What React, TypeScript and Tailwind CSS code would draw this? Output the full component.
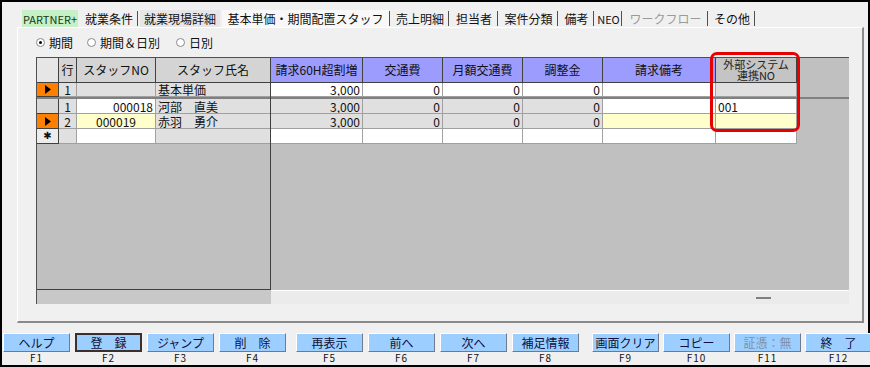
import type { ReactNode } from "react";

type Bg = "w" | "g" | "y";
type Align = "l" | "c" | "r";
type CellDef = { t?: string; bg: Bg; a?: Align };
type RowDef = {
  mark: "arrow" | "none" | "new";
  h: string;
  left: CellDef[];
  right: CellDef[];
};

const bgClass: Record<Bg, string> = {
  w: "bg-white",
  g: "bg-[#e0e0e0]",
  y: "bg-[#ffffcc]",
};

const alignClass: Record<Align, string> = {
  l: "justify-start pl-[2px]",
  c: "justify-center",
  r: "justify-end pr-[2px]",
};

const leftCols = ["w-[18px]", "w-[79px]", "w-[114px]"];
const rightCols = ["w-[92px]", "w-[80px]", "w-[80px]", "w-[80px]", "w-[113px]", "w-[81px]"];

const rows: RowDef[] = [
  {
    mark: "arrow",
    h: "h-[14px]",
    left: [{ t: "1", bg: "g", a: "c" }, { bg: "g" }, { t: "基本単価", bg: "g", a: "l" }],
    right: [
      { t: "3,000", bg: "w", a: "r" },
      { t: "0", bg: "w", a: "r" },
      { t: "0", bg: "w", a: "r" },
      { t: "0", bg: "w", a: "r" },
      { bg: "w" },
      { bg: "g" },
    ],
  },
  {
    mark: "none",
    h: "h-[15px]",
    left: [
      { t: "1", bg: "g", a: "c" },
      { t: "000018", bg: "w", a: "r" },
      { t: "河部　直美", bg: "g", a: "l" },
    ],
    right: [
      { t: "3,000", bg: "g", a: "r" },
      { t: "0", bg: "g", a: "r" },
      { t: "0", bg: "g", a: "r" },
      { t: "0", bg: "g", a: "r" },
      { bg: "w" },
      { t: "001", bg: "w", a: "l" },
    ],
  },
  {
    mark: "arrow",
    h: "h-[15px]",
    left: [
      { t: "2", bg: "g", a: "c" },
      { t: "000019", bg: "y", a: "c" },
      { t: "赤羽　勇介", bg: "g", a: "l" },
    ],
    right: [
      { t: "3,000", bg: "g", a: "r" },
      { t: "0", bg: "g", a: "r" },
      { t: "0", bg: "g", a: "r" },
      { t: "0", bg: "g", a: "r" },
      { bg: "y" },
      { bg: "y" },
    ],
  },
  {
    mark: "new",
    h: "h-[15px]",
    left: [{ bg: "g" }, { bg: "w" }, { bg: "g" }],
    right: [{ bg: "w" }, { bg: "w" }, { bg: "w" }, { bg: "w" }, { bg: "w" }, { bg: "w" }],
  },
];

const tabs = [
  { label: "PARTNER+", cls: "w-[56px] mr-[4px] bg-[#c6f0c6] text-[#143814] text-[11px]", sep: false },
  { label: "就業条件", cls: "w-[54px] mr-[1px]", sep: true },
  { label: "就業現場詳細", cls: "w-[80px] ml-[2px] mr-[2px] bg-[#e6e6e6]", sep: false },
  { label: "基本単価・期間配置スタッフ", cls: "w-[167px] bg-[#f8f8f8]", sep: true },
  { label: "売上明細", cls: "w-[56px] ml-[2px]", sep: true },
  { label: "担当者", cls: "w-[46px] ml-[2px]", sep: true },
  { label: "案件分類", cls: "w-[57px] ml-[2px]", sep: true },
  { label: "備考", cls: "w-[33px] ml-[2px]", sep: true },
  { label: "NEO", cls: "w-[25px] ml-[2px] text-[11px]", sep: true },
  { label: "ワークフロー", cls: "w-[83px] ml-[2px] text-[#9a9a9a]", sep: true },
  { label: "その他", cls: "w-[44px] ml-[2px]", sep: true },
];

const fkeys = [
  {
    cls: "ml-[1px] gap-[5px]",
    items: [
      { label: "ヘルプ", key: "F1" },
      { label: "登　録", key: "F2", focus: true },
      { label: "ジャンプ", key: "F3" },
      { label: "削　除", key: "F4" },
    ],
  },
  {
    cls: "ml-[10px] gap-[5px]",
    items: [
      { label: "再表示", key: "F5" },
      { label: "前へ", key: "F6" },
      { label: "次へ", key: "F7" },
      { label: "補足情報", key: "F8" },
    ],
  },
  {
    cls: "ml-[13px] gap-[4px]",
    items: [
      { label: "画面クリア", key: "F9" },
      { label: "コピー", key: "F10" },
      { label: "証憑：無", key: "F11", disabled: true },
      { label: "終　了", key: "F12" },
    ],
  },
];

const Radio = ({ checked }: { checked?: boolean }) => (
  <span className="w-[9px] h-[9px] rounded-full border border-[#8a8a8a] bg-white flex items-center justify-center">
    {checked && <span className="w-[3px] h-[3px] rounded-full bg-black" />}
  </span>
);

const RowMark = ({ mark }: { mark: RowDef["mark"] }) => {
  if (mark === "arrow") {
    return (
      <div className="w-[22px] h-full border-r border-b border-[#404040] bg-[#ff8000] flex items-center justify-center">
        <svg width="6" height="9" viewBox="0 0 6 9">
          <path d="M0 0 L6 4.5 L0 9 Z" fill="#000" />
        </svg>
      </div>
    );
  }
  if (mark === "new") {
    return (
      <div className="w-[22px] h-full border-r border-b border-[#404040] bg-[#ececec] flex items-center justify-center text-[10px] leading-none font-['DejaVu_Sans',sans-serif]">
        ✱
      </div>
    );
  }
  return <div className="w-[22px] h-full border-r border-b border-[#404040] bg-[#d8d8d8]" />;
};

const Cell = ({ def, w, noRight }: { def: CellDef; w: string; noRight?: boolean }) => (
  <div
    className={`${w} h-full flex items-center ${noRight ? "" : "border-r"} border-b border-[#a0a0a0] ${bgClass[def.bg]} ${alignClass[def.a ?? "l"]} whitespace-nowrap overflow-hidden leading-[13px]`}
  >
    {def.t}
  </div>
);

const HeadCell = ({ w, bg, children, noRight }: { w: string; bg: string; children?: ReactNode; noRight?: boolean }) => (
  <div
    className={`${w} h-full flex items-center justify-center ${noRight ? "" : "border-r"} border-b border-[#404040] ${bg} whitespace-nowrap`}
  >
    {children}
  </div>
);

export default function App() {
  return (
    <div className="w-[870px] h-[367px] overflow-hidden bg-[#f0f0f0] border-l-2 border-t-2 border-b-2 border-black text-[12px] leading-[14px] text-[#111] font-['Noto_Sans_CJK_JP',sans-serif]">
      <div className="h-[331px] pt-[8px] border-r-2 border-black">
        {/* tabs */}
        <div className="h-[17px] pl-[20px] flex items-stretch">
          {tabs.map((t) => (
            <div key={t.label} className="flex items-center">
              <div className={`${t.cls} h-[17px] flex items-center justify-center whitespace-nowrap`}>{t.label}</div>
              {t.sep && <div className="w-px h-[15px] bg-[#505050]" />}
            </div>
          ))}
        </div>

        {/* panel */}
        <div className="ml-[15px] w-[847px] h-[296px] border-l border-t border-l-white border-t-white border-r-2 border-b-2 border-r-[#8a8a8a] border-b-[#8a8a8a] pt-[8px]">
          <div className="h-[13px] pl-[18px] flex items-center">
            <Radio checked />
            <span className="ml-[4px]">期間</span>
            <span className="ml-[14px]">
              <Radio />
            </span>
            <span className="ml-[4px]">期間＆日別</span>
            <span className="ml-[16px]">
              <Radio />
            </span>
            <span className="ml-[4px]">日別</span>
          </div>

          {/* grid */}
          <div className="relative ml-[18px] mt-[8px] w-[813px] border-l border-t border-[#505050]">
            <div className="flex h-[232px]">
              {/* frozen pane */}
              <div className="w-[234px] border-r border-b border-[#404040] bg-[#c0c0c0] flex flex-col">
                <div className="h-[25px] flex">
                  <HeadCell w="w-[22px]" bg="bg-[#e6e6e6]" />
                  <HeadCell w={leftCols[0]} bg="bg-[#d4d4d4]">行</HeadCell>
                  <HeadCell w={leftCols[1]} bg="bg-[#d4d4d4]">スタッフNO</HeadCell>
                  <HeadCell w={leftCols[2]} bg="bg-[#d4d4d4]" noRight>
                    スタッフ氏名
                  </HeadCell>
                </div>
                {rows.map((r, i) => (
                  <div key={i}>
                    <div className={`${r.h} flex`}>
                      <RowMark mark={r.mark} />
                      {r.left.map((c, j) => (
                        <Cell key={j} def={c} w={leftCols[j]} noRight={j === 2} />
                      ))}
                    </div>
                    {i === 0 && <div className="h-[2px] bg-[#808080]" />}
                  </div>
                ))}
              </div>

              {/* scrolling pane */}
              <div className="flex-1 bg-[#c0c0c0] flex flex-col">
                <div className="h-[25px] flex">
                  <HeadCell w={rightCols[0]} bg="bg-[#9c9cff]">請求60H超割増</HeadCell>
                  <HeadCell w={rightCols[1]} bg="bg-[#9c9cff]">交通費</HeadCell>
                  <HeadCell w={rightCols[2]} bg="bg-[#9c9cff]">月額交通費</HeadCell>
                  <HeadCell w={rightCols[3]} bg="bg-[#9c9cff]">調整金</HeadCell>
                  <HeadCell w={rightCols[4]} bg="bg-[#9c9cff]">請求備考</HeadCell>
                  <HeadCell w={rightCols[5]} bg="bg-[#c4c4c4]">
                    <span className="text-center text-[11px] leading-[11px] text-[#222]">
                      外部システム
                      <br />
                      連携NO
                    </span>
                  </HeadCell>
                </div>
                {rows.map((r, i) => (
                  <div key={i}>
                    <div className={`${r.h} flex`}>
                      {r.right.map((c, j) => (
                        <Cell key={j} def={c} w={rightCols[j]} />
                      ))}
                    </div>
                    {i === 0 && <div className="h-[2px] bg-[#808080]" />}
                  </div>
                ))}
              </div>
            </div>

            {/* horizontal scroll strip */}
            <div className="flex h-[14px]">
              <div className="w-[234px] bg-[#c8c8c8]" />
              <div className="flex-1 bg-[#ebebeb] border-t border-white flex items-center justify-end pr-[78px]">
                <div className="w-[15px] h-[2px] bg-[#808080]" />
              </div>
            </div>

            {/* highlight box */}
            <div className="absolute left-[673px] top-[-6px] w-[90px] h-[80px] border-[3px] border-[#e60000] rounded-[7px]" />
          </div>
        </div>
      </div>

      {/* function keys */}
      <div className="h-[32px] flex">
        {fkeys.map((g, gi) => (
          <div key={gi} className={`flex shrink-0 ${g.cls}`}>
            {g.items.map((b) => (
              <div key={b.key} className="w-[67px] shrink-0 flex flex-col">
                <div
                  className={`h-[19px] flex items-center justify-center bg-[#9ccfff] whitespace-nowrap ${
                    b.focus
                      ? "border-2 border-[#3a3030]"
                      : "border border-t-white border-l-white border-r-[#6a7a90] border-b-[#6a7a90]"
                  } ${b.disabled ? "text-[#8090a8]" : "text-[#10103a]"}`}
                >
                  {b.label}
                </div>
                <div className="h-[12px] flex items-center justify-center text-[10px] leading-none tracking-[1px]">
                  {b.key}
                </div>
              </div>
            ))}
          </div>
        ))}
      </div>
    </div>
  );
}
